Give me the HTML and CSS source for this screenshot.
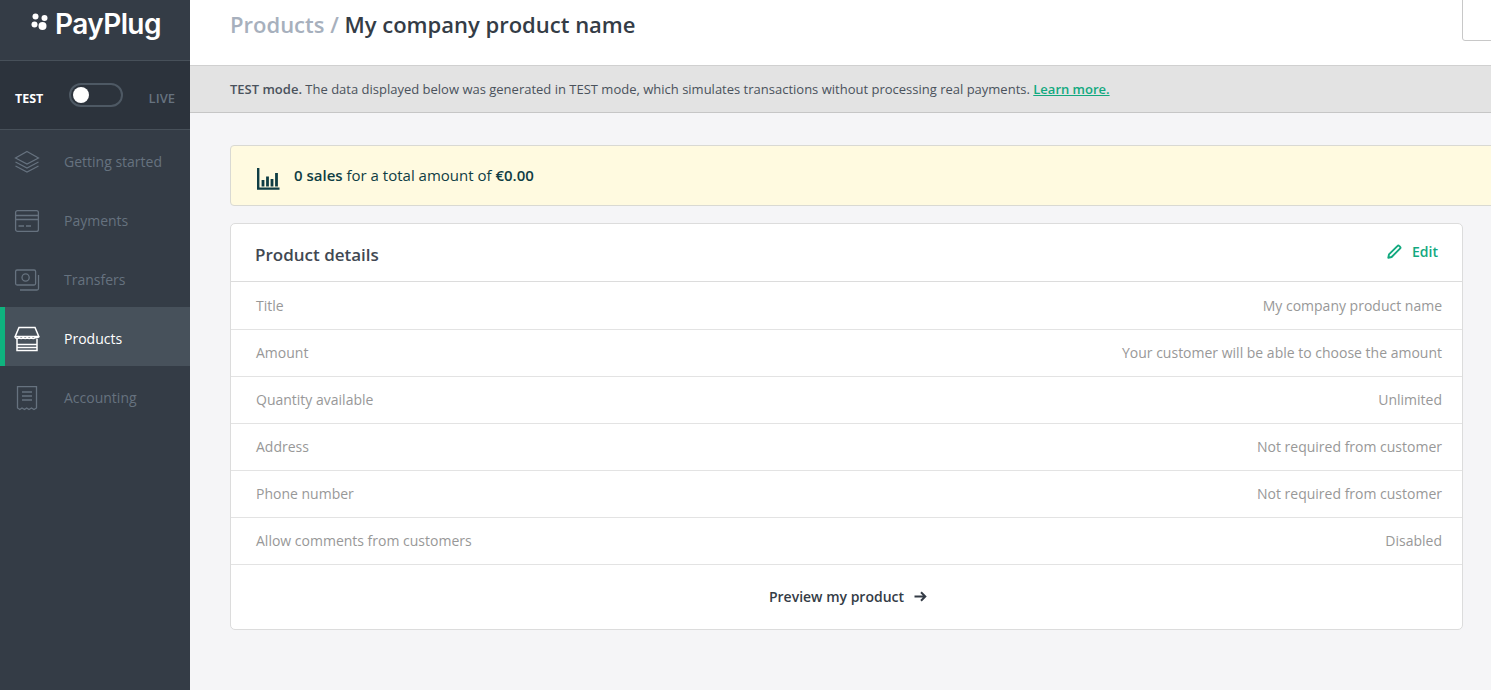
FILE: index.html
```html
<!DOCTYPE html>
<html lang="en">
<head>
<meta charset="utf-8">
<title>PayPlug - Product</title>
<link rel="stylesheet" href="styles.css">
</head>
<body>
<div class="app">
  <aside class="sidebar">
    <div class="brand">
      <svg class="brand-mark" width="18" height="18" viewBox="0 0 18 18"><circle cx="4.5" cy="3.5" r="3" fill="#fff"/><circle cx="13.5" cy="5" r="3" fill="#fff"/><circle cx="3.5" cy="11.5" r="3" fill="#fff"/><circle cx="11.5" cy="13" r="4" fill="#fff"/></svg>
      <span class="brand-name">PayPlug</span>
    </div>
    <div class="mode">
      <span class="mode-test">TEST</span>
      <span class="switch"><span class="knob"></span></span>
      <span class="mode-live">LIVE</span>
    </div>
    <nav class="nav">
      <a class="nav-item">
        <svg class="nav-icon" width="26" height="24" viewBox="0 0 26 24" fill="none" stroke="currentColor" stroke-width="1.2"><path d="M13 1.5 24.5 8 13 14 1.5 8Z"/><path d="M1.5 12 13 18 24.5 12"/><path d="M1.5 16 13 22 24.5 16"/></svg>
        <span>Getting started</span>
      </a>
      <a class="nav-item">
        <svg class="nav-icon" width="26" height="24" viewBox="0 0 26 24" fill="none" stroke="currentColor" stroke-width="1.3"><rect x="1.6" y="1.6" width="22.8" height="20.8" rx="2"/><path d="M1.6 6.5H24.4M1.6 10.5H24.4M4.5 17H10M12 17H17"/></svg>
        <span>Payments</span>
      </a>
      <a class="nav-item">
        <svg class="nav-icon" width="26" height="24" viewBox="0 0 26 24" fill="none" stroke="currentColor" stroke-width="1.3"><rect x="1.6" y="2" width="20" height="15" rx="1.5"/><circle cx="11.6" cy="9.5" r="3.6"/><path d="M24.5 7V20.5a1.5 1.5 0 0 1-1.5 1.5H6"/></svg>
        <span>Transfers</span>
      </a>
      <a class="nav-item active">
        <svg class="nav-icon" width="26" height="26" viewBox="0 0 26 26" fill="none" stroke="currentColor" stroke-width="1.5"><path d="M5 1.5H21L24.8 10.5H1.2Z"/><path d="M1.2 10.5a2 2 0 0 0 4 0 2 2 0 0 0 4 0 2 2 0 0 0 4 0 2 2 0 0 0 4 0 2 2 0 0 0 4 0 2 2 0 0 0 3.6 0"/><path d="M3 13V24.5H23V13M3 18.5H23M3 21.5H23"/></svg>
        <span>Products</span>
      </a>
      <a class="nav-item">
        <svg class="nav-icon" width="26" height="26" viewBox="0 0 26 26" fill="none" stroke="currentColor" stroke-width="1.3"><path d="M3.5 23V1.7H22.5V23L20 24.5 17.5 23 15 24.5 12.7 23 10.5 24.5 8 23 5.8 24.5Z"/><path d="M8 7H18M8 11H18M8 15H18"/></svg>
        <span>Accounting</span>
      </a>
    </nav>
  </aside>
  <main class="main">
    <header class="topbar">
      <h1 class="title"><span class="crumb">Products /</span> My company product name</h1>
      <div class="top-box"></div>
    </header>
    <p class="notice"><strong>TEST mode.</strong> The data displayed below was generated in TEST mode, which simulates transactions without processing real payments. <a class="notice-link">Learn more.</a></p>
    <div class="content">
      <div class="alert">
        <svg class="alert-icon" width="23" height="22" viewBox="0 0 23 22" fill="none" stroke="#0f3d44"><path d="M1.2 0V20.6H22.5" stroke-width="2.4"/><path d="M6 18.5V12M10.5 18.5V8.5M15 18.5V11M19.5 18.5V5" stroke-width="2.8"/></svg>
        <span><strong>0 sales</strong> for a total amount of <strong>€0.00</strong></span>
      </div>
      <section class="card">
        <div class="card-head">
          <h2 class="card-title">Product details</h2>
          <a class="edit">
            <svg width="15" height="15" viewBox="0 0 15 15" fill="none" stroke="#12a97f"><path d="M1.3 13.7 2 10.4 10.6 1.8a1 1 0 0 1 1.5 0l1.1 1.1a1 1 0 0 1 0 1.5L4.6 13Z" stroke-width="1.9" stroke-linejoin="round"/></svg>
            Edit
          </a>
        </div>
        <div class="row"><span>Title</span><span>My company product name</span></div>
        <div class="row"><span>Amount</span><span>Your customer will be able to choose the amount</span></div>
        <div class="row"><span>Quantity available</span><span>Unlimited</span></div>
        <div class="row"><span>Address</span><span>Not required from customer</span></div>
        <div class="row"><span>Phone number</span><span>Not required from customer</span></div>
        <div class="row"><span>Allow comments from customers</span><span>Disabled</span></div>
        <div class="card-foot">
          <a class="preview">Preview my product
            <svg width="13" height="11" viewBox="0 0 13 11" fill="none" stroke="#343c46" stroke-width="2"><path d="M0.5 5.5H11M7 1.2 11.3 5.5 7 9.8"/></svg>
          </a>
        </div>
      </section>
    </div>
  </main>
</div>
</body>
</html>
```
FILE: styles.css
```css
* { box-sizing: border-box; }
html, body { margin: 0; height: 100%; overflow: hidden; }
body { font-family: "Open Sans", sans-serif; font-size: 14px; color: #343c46; background: #f5f5f7; }
.app { display: flex; width: 1491px; height: 690px; overflow: hidden; }

.sidebar { width: 190px; flex: none; background: #343c46; }
.brand { height: 61px; border-bottom: 1px solid #475059; display: flex; align-items: flex-start; padding: 12px 0 0 31px; color: #fff; }
.brand-mark { margin: 1px 6px 0 0; }
.brand-name { font-family: Inter, sans-serif; font-size: 28px; font-weight: 600; line-height: 24px; letter-spacing: -0.6px; }
.mode { height: 69px; background: #2c333c; border-bottom: 1px solid #475059; display: flex; align-items: center; padding: 0 15px; font-size: 13px; font-weight: 600; }
.mode-test { color: #fff; font-weight: 700; font-size: 12.5px; width: 54px; margin-top: 6px; }
.mode-live { color: #66727f; margin-left: 26px; margin-top: 5px; }
.switch { width: 54px; height: 24px; border: 2px solid #4e5964; border-radius: 12px; padding: 2px 0 0 2px; }
.knob { display: block; width: 16px; height: 16px; border-radius: 50%; background: #fff; }

.nav-item { height: 59px; display: flex; align-items: center; padding: 3px 0 0 14px; color: #66727f; font-size: 14px; }
.nav-icon { width: 26px; flex: none; margin: 2px 24px 0 0; }
.nav-item.active { background: #47515b; color: #fff; box-shadow: inset 5px 0 0 #0fb37e; }

.main { flex: 1; min-width: 0; display: flex; flex-direction: column; overflow: hidden; }
.topbar { height: 66px; flex: none; background: #fff; border-bottom: 1px solid #d0d0d0; padding: 9px 0 0 40px; position: relative; }
.title { margin: 0; font-size: 22px; font-weight: 600; line-height: 30px; color: #343c46; }
.crumb { color: #a7b0bd; }
.top-box { position: absolute; right: -10px; top: -5px; width: 39px; height: 46px; border: 1px solid #c8c8c8; border-radius: 3px; background: #fff; }
.notice { margin: 0; height: 47px; flex: none; background: #e3e3e3; border-bottom: 1px solid #c6c6c6; padding: 0 40px; font-size: 13px; line-height: 46px; color: #4a525c; white-space: nowrap; }
.notice strong { font-weight: 600; }
.notice-link { color: #12a97f; font-weight: 600; text-decoration: underline; }

.content { padding: 32px 28px 0 40px; width: 1301px; }
.alert { width: 1400px; height: 61px; background: #fffae0; border: 1px solid #d9d9d3; border-radius: 4px; display: flex; align-items: center; padding: 0 0 2px 26px; color: #0f3d44; font-size: 15px; gap: 14px; }
.alert strong { font-weight: 600; }
.alert-icon { margin-top: 9px; }
.card { margin-top: 17px; width: 1233px; background: #fff; border: 1px solid #dcdcdc; border-radius: 5px; color: #989898; }
.card-head { height: 58px; margin-bottom: 1px; border-bottom: 1px solid #dcdcdc; display: flex; justify-content: space-between; padding: 0 24px; }
.card-title { margin: 0; font-size: 17px; font-weight: 600; color: #414852; line-height: 62px; }
.edit { color: #12a97f; font-weight: 600; display: flex; align-items: center; gap: 10px; height: 54px; }
.row { height: 47px; border-bottom: 1px solid #e3e3e3; display: flex; justify-content: space-between; align-items: center; padding: 0 20px 2px 25px; font-size: 14px; }
.card-foot { height: 64px; display: flex; justify-content: center; align-items: center; padding: 0 0 2px 3px; }
.preview { color: #343c46; font-weight: 600; font-size: 14px; display: flex; align-items: center; gap: 10px; }
```
